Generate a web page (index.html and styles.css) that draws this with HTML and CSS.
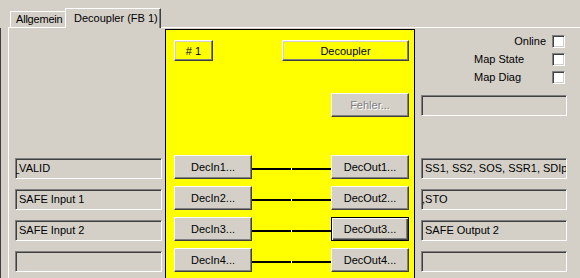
FILE: index.html
```html
<!DOCTYPE html>
<html lang="de">
<head>
    <meta charset="UTF-8">
    <title>Decoupler (FB 1)</title>
    <link rel="stylesheet" href="styles.css">
</head>
<body>
    <div class="window">
        <div class="tabstrip">
            <span class="tab-lead"></span>
            <div class="tab">Allgemein</div>
            <div class="tab active">Decoupler (FB 1)</div>
            <span class="tab-fill"></span>
        </div>
        <div class="sheet">
            <div class="col col-left">
                <div class="field"><span class="scrolled">_VALID</span></div>
                <div class="field">SAFE Input 1</div>
                <div class="field">SAFE Input 2</div>
                <div class="field"></div>
            </div>
            <div class="block">
                <div class="block-head">
                    <button class="btn yellow num"># 1</button>
                    <button class="btn yellow name">Decoupler</button>
                </div>
                <div class="block-err">
                    <button class="btn" disabled>Fehler...</button>
                </div>
                <div class="chan first">
                    <button class="btn">DecIn1...</button>
                    <span class="wire"></span>
                    <button class="btn">DecOut1...</button>
                </div>
                <div class="chan">
                    <button class="btn">DecIn2...</button>
                    <span class="wire"></span>
                    <button class="btn">DecOut2...</button>
                </div>
                <div class="chan">
                    <button class="btn">DecIn3...</button>
                    <span class="wire"></span>
                    <button class="btn default">DecOut3...</button>
                </div>
                <div class="chan">
                    <button class="btn">DecIn4...</button>
                    <span class="wire"></span>
                    <button class="btn">DecOut4...</button>
                </div>
            </div>
            <div class="col col-right">
                <div class="opt online"><label>Online</label><span class="box"></span></div>
                <div class="opt"><label>Map State</label><span class="box"></span></div>
                <div class="opt"><label>Map Diag</label><span class="box"></span></div>
                <div class="field status"></div>
                <div class="field io-first">SS1, SS2, SOS, SSR1, SDIp</div>
                <div class="field"><span class="scrolled comma">,STO</span></div>
                <div class="field">SAFE Output 2</div>
                <div class="field"></div>
            </div>
        </div>
    </div>
</body>
</html>
```

FILE: styles.css
```css
* {
    box-sizing: border-box;
}
body {
    margin: 0;
    background-color: #d4d0c8;
    font-family: "Liberation Sans", Arial, sans-serif;
    font-size: 11px;
    color: #000;
}
.window {
    width: 580px;
    height: 278px;
    overflow: hidden;
}

/* tabs */
.tabstrip {
    display: flex;
    align-items: flex-end;
    height: 28px;
    padding-left: 8px;
}
.tab-lead {
    width: 2px;
    flex-shrink: 0;
    border-bottom: 1px solid #fff;
}
.tab-fill {
    flex: 1;
    border-bottom: 1px solid #fff;
}
.tab {
    flex-shrink: 0;
    width: 55px;
    height: 17px;
    padding-left: 5px;
    line-height: 15px;
    letter-spacing: -0.2px;
    border-top: 1px solid #fff;
    border-left: 1px solid #fff;
    border-bottom: 1px solid #fff;
    white-space: nowrap;
}
.tab.active {
    width: 96px;
    height: 20px;
    padding-left: 8px;
    line-height: 18px;
    letter-spacing: 0;
    border-bottom: none;
    border-right: 1px solid #404040;
    box-shadow: inset -1px 0 #808080;
}

/* sheet: outer dark edge at the far left, white panel edge at x=8 */
.sheet {
    display: flex;
    height: 250px;
    padding-left: 9px;
    background: linear-gradient(to right, #404040 0 1px, transparent 1px 8px, #fff 8px 9px, transparent 9px);
}
.col {
    display: flex;
    flex-direction: column;
}
.col-left {
    flex-shrink: 0;
    width: 156px;
    padding: 130px 0 0 6px;
    gap: 10px;
}
.col-right {
    flex: 1;
    min-width: 0;
    padding: 7px 15px 0 6px;
}
.col-right .field {
    width: 146px;
    margin-top: 10px;
}
.col-right .status {
    margin-top: 6px;
}
.col-right .io-first {
    margin-top: 42px;
}

.field {
    flex-shrink: 0;
    width: 147px;
    height: 21px;
    padding: 0 2px 0 3px;
    line-height: 19px;
    white-space: nowrap;
    overflow: hidden;
    border: 1px solid;
    border-color: #808080 #fff #fff #808080;
    box-shadow: inset 1px 1px #404040, inset -1px -1px #d4d0c8;
}
.scrolled {
    display: inline-block;
    margin-left: -6px;
}
.scrolled.comma {
    margin-left: -3px;
}

/* options */
.opt {
    display: flex;
    flex-shrink: 0;
    justify-content: flex-end;
    align-items: flex-start;
    height: 18px;
}
.opt label {
    width: 72px;
    margin-right: 6px;
    line-height: 13px;
}
.opt.online label {
    text-align: right;
}
.box {
    flex-shrink: 0;
    width: 13px;
    height: 13px;
    background-color: #fff;
    border: 1px solid;
    border-color: #808080 #fff #fff #808080;
    box-shadow: inset 1px 1px #404040, inset -1px -1px #d4d0c8;
}

/* function block */
.block {
    flex-shrink: 0;
    width: 250px;
    margin-top: 1px;
    padding: 10px 5px 0 8px;
    background-color: #ff0;
    border: 1px solid #000;
    border-bottom: none;
}
.block-head {
    display: flex;
    justify-content: space-between;
    height: 21px;
}
.block-err {
    display: flex;
    justify-content: flex-end;
    margin-top: 32px;
}
.chan {
    display: flex;
    align-items: flex-start;
    margin-top: 7px;
}
.chan.first {
    margin-top: 38px;
}
.wire {
    flex: 1;
    height: 2px;
    margin-top: 13px;
    background: linear-gradient(to right, #000 39px, #fff 39px, #fff 40px, #000 40px);
}

.btn {
    flex-shrink: 0;
    width: 78px;
    height: 24px;
    padding: 0;
    font-family: inherit;
    font-size: 11px;
    color: #000;
    background-color: #d4d0c8;
    border: 1px solid;
    border-color: #fff #404040 #404040 #fff;
    box-shadow: inset -1px -1px #808080, inset 1px 1px #d4d0c8;
}
.btn.yellow {
    height: 21px;
    background-color: #ff0;
}
.btn.num {
    width: 39px;
}
.btn.name {
    width: 127px;
}
.btn:disabled {
    color: #808080;
    text-shadow: 1px 1px #fff;
}
.btn.default {
    border-color: #000;
    box-shadow: inset 1px 1px #fff, inset -1px -1px #404040, inset -2px -2px #808080;
}
```
